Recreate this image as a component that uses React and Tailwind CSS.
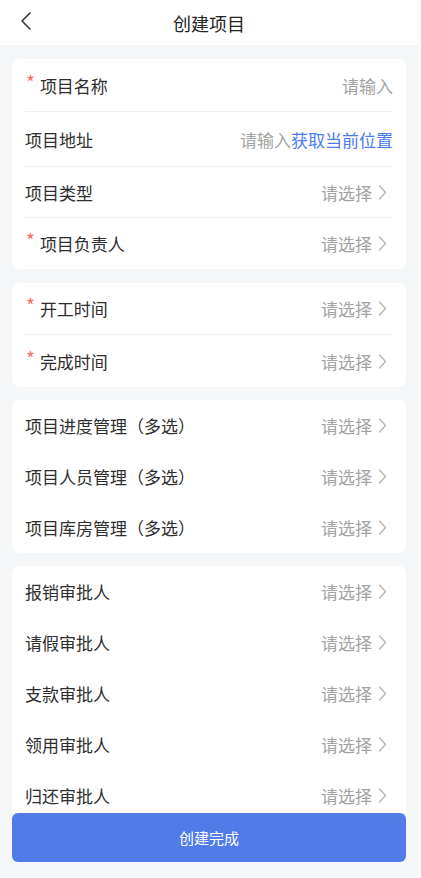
import React from "react";

const font = { fontFamily: '"Noto Sans CJK SC", "Noto Sans", sans-serif' };

function Chevron() {
  return (
    <svg width="9" height="15" viewBox="0 0 9 15" className="ml-[6px] mr-[6px] shrink-0">
      <path d="M1.5 1 L7.5 7.5 L1.5 14" fill="none" stroke="#b3b3b3" strokeWidth="1.3" strokeLinecap="round" strokeLinejoin="round" />
    </svg>
  );
}

function Star() {
  return (
    <span className="text-[#f56c6c] text-[19px] leading-none mr-[5px] ml-[1px] relative top-[-4px]">*</span>
  );
}

function Row({ label, required, value = "请选择", arrow = true, link, h = "h-[51px]", divider }) {
  return (
    <div className={`flex items-center ${h} ${divider ? "border-b border-[#f0f0f0]" : ""}`}>
      <div className="flex items-center flex-1 min-w-0">
        {required && <Star />}
        <span className="text-[17px] text-[#2e2e2e] leading-none">{label}</span>
      </div>
      <div className="flex items-center">
        <span className="text-[17px] text-[#a3a3a3] leading-none">{value}</span>
        {link && <span className="text-[17px] text-[#4b7bf0] leading-none">{link}</span>}
        {arrow && <Chevron />}
      </div>
    </div>
  );
}

function Card({ children, className = "" }) {
  return <div className={`bg-white rounded-[8px] px-[13px] ${className}`}>{children}</div>;
}

export default function App() {
  return (
    <div className="flex w-[421px] h-[878px] bg-[#f5f6f8] overflow-hidden" style={font}>
      <div className="flex flex-col w-[418px] h-full">
        <div className="h-[45px] bg-white flex items-center relative shrink-0">
          <svg width="14" height="20" viewBox="0 0 14 20" className="absolute left-[19px] top-[11px]">
            <path d="M11 2 L3 10 L11 18" fill="none" stroke="#333" strokeWidth="1.6" strokeLinecap="round" strokeLinejoin="round" />
          </svg>
          <div className="flex-1 text-center text-[18px] text-[#222] leading-none pt-[1px]">创建项目</div>
        </div>

        <div className="flex-1 overflow-hidden px-[12px] pt-[14px]">
          <Card>
            <div className="flex items-center h-[53px] border-b border-[#f0f0f0]">
              <div className="flex items-center flex-1">
                <Star />
                <span className="text-[17px] text-[#2e2e2e] leading-none">项目名称</span>
              </div>
              <span className="text-[17px] text-[#a3a3a3] leading-none">请输入</span>
            </div>
            <Row label="项目地址" h="h-[55px]" arrow={false} value="请输入" link="获取当前位置" divider />
            <Row label="项目类型" divider />
            <Row label="项目负责人" required />
          </Card>

          <Card className="mt-[14px]">
            <Row label="开工时间" required h="h-[52px]" divider />
            <Row label="完成时间" required h="h-[52px]" />
          </Card>

          <Card className="mt-[13px]">
            <Row label="项目进度管理（多选）" />
            <Row label="项目人员管理（多选）" />
            <Row label="项目库房管理（多选）" />
          </Card>

          <Card className="mt-[13px]">
            <Row label="报销审批人" />
            <Row label="请假审批人" />
            <Row label="支款审批人" />
            <Row label="领用审批人" />
            <Row label="归还审批人" />
          </Card>
        </div>

        <div className="shrink-0 px-[12px] pb-[16px] bg-[#f5f6f8]">
          <button className="w-full h-[49px] rounded-[6px] bg-[#527bea] text-white text-[15px] leading-none">
            创建完成
          </button>
        </div>
      </div>
      <div className="w-[3px] h-full bg-[#fbfbfc]" />
    </div>
  );
}
